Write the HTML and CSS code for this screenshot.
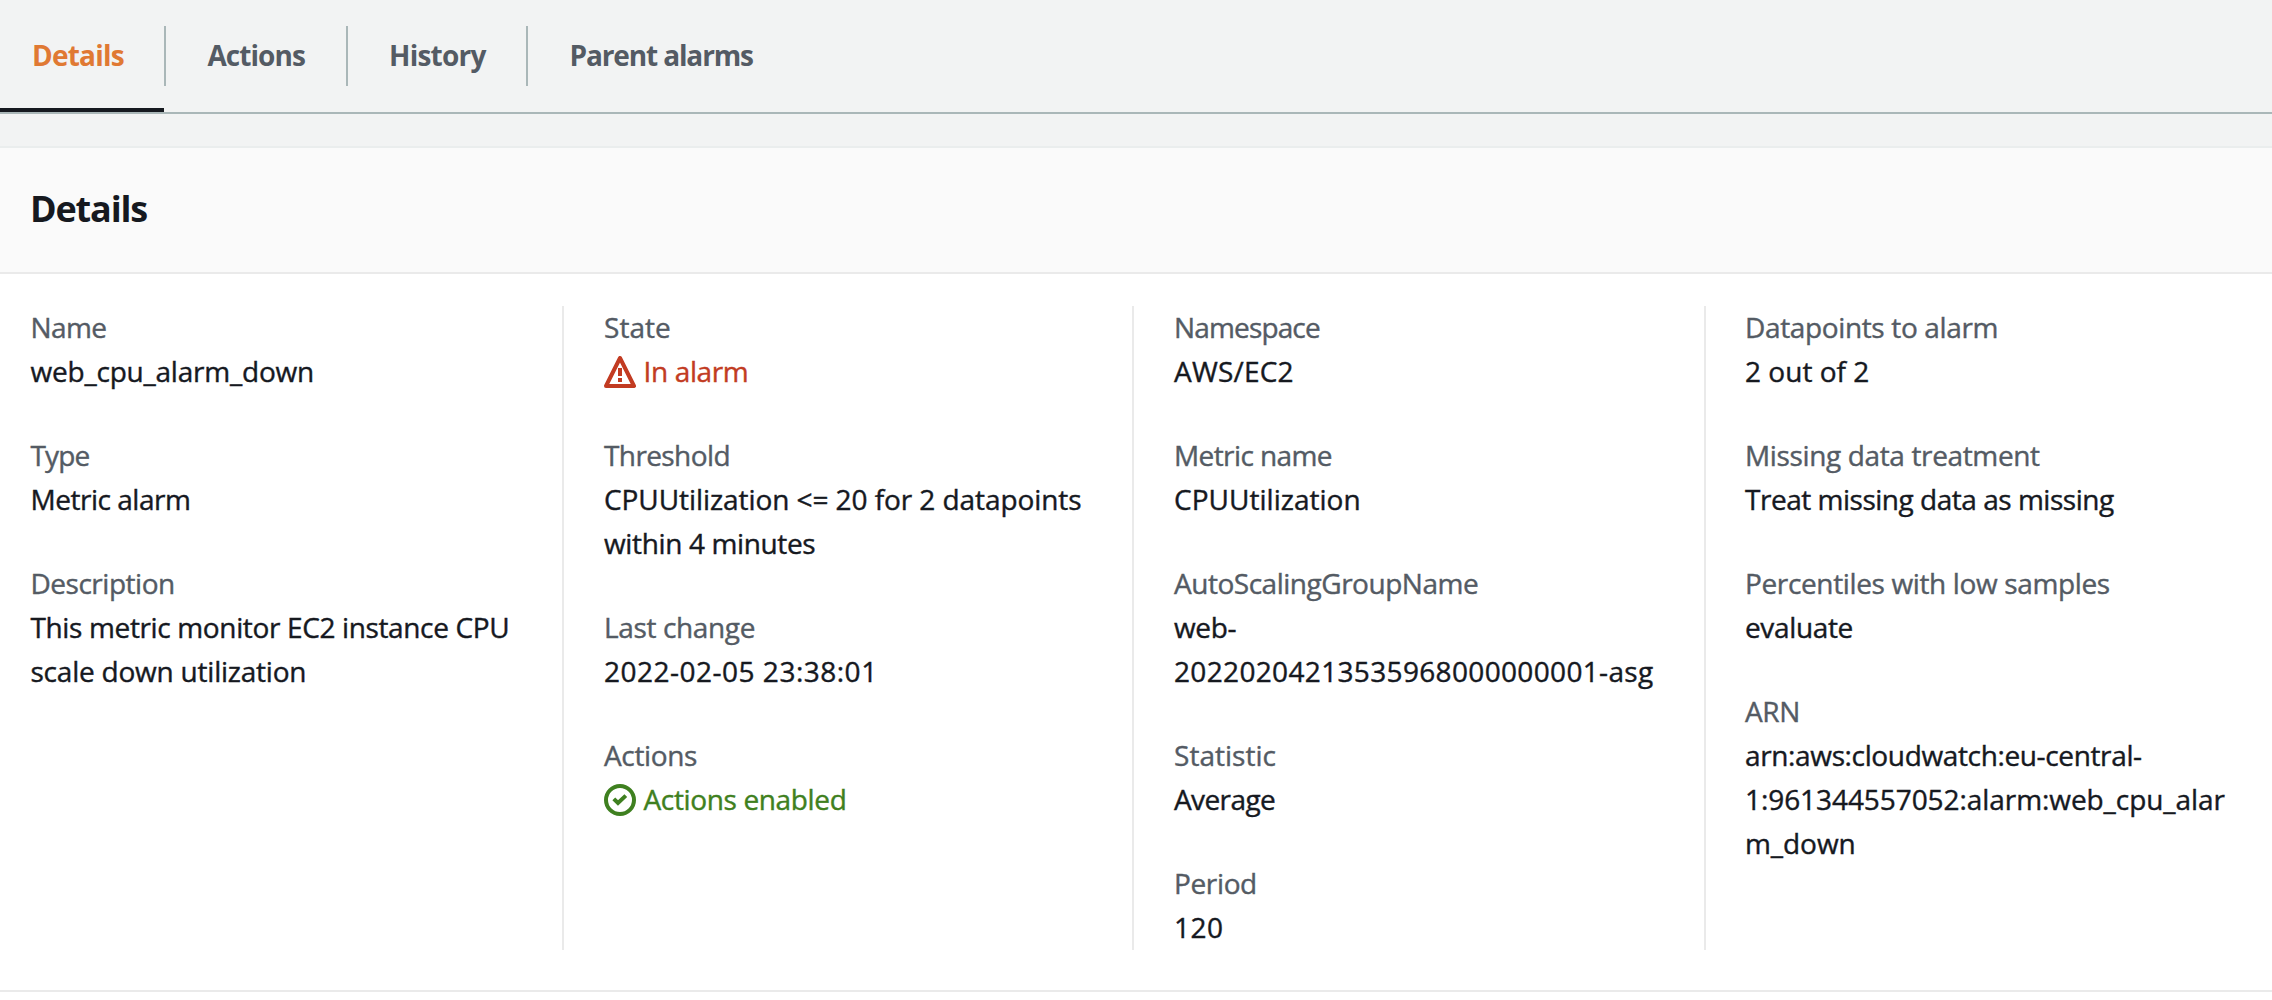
FILE: index.html
```
<!DOCTYPE html>
<html lang="en">
<head>
<meta charset="utf-8">
<title>Alarm details</title>
<link rel="stylesheet" href="styles.css">
</head>
<body>
<nav class="tabs">
  <a class="tab tab-details active"><span>Details</span></a>
  <a class="tab tab-actions"><span>Actions</span></a>
  <a class="tab tab-history"><span>History</span></a>
  <a class="tab tab-parents"><span>Parent alarms</span></a>
</nav>
<section class="panel">
  <header class="panel-header"><h2>Details</h2></header>
  <div class="columns">
    <dl class="column">
      <div class="field"><dt class="snug">Name</dt><dd class="loose">web_cpu_alarm_down</dd></div>
      <div class="field"><dt class="tight">Type</dt><dd class="medium">Metric alarm</dd></div>
      <div class="field"><dt class="medium">Description</dt><dd>This metric monitor EC2 instance CPU <span class="loose">scale down utilization</span></dd></div>
    </dl>
    <dl class="column">
      <div class="field"><dt class="even">State</dt>
        <dd class="status alarm">
          <svg class="icon" viewBox="0 0 16 16"><path class="round" d="M8 1l7 14H1z"/><path d="M8 6v4M8 11v2"/></svg>
          <span>In alarm</span>
        </dd></div>
      <div class="field"><dt class="snug">Threshold</dt><dd><span class="near">CPUUtilization &lt;= 20 for 2 datapoints</span> within 4 minutes</dd></div>
      <div class="field"><dt>Last change</dt><dd class="date">2022-02-05 23:38:01</dd></div>
      <div class="field"><dt>Actions</dt>
        <dd class="status ok">
          <svg class="icon" viewBox="0 0 16 16"><circle cx="8" cy="8" r="7"/><path d="M4.9 7.4L7 9.5l3.9-3.7"/></svg>
          <span>Actions enabled</span>
        </dd></div>
    </dl>
    <dl class="column">
      <div class="field"><dt class="tight">Namespace</dt><dd class="wide">AWS/EC2</dd></div>
      <div class="field"><dt class="snug">Metric name</dt><dd class="even">CPUUtilization</dd></div>
      <div class="field"><dt class="medium">AutoScalingGroupName</dt><dd>web-<br><span class="digits">20220204213535968000000001-asg</span></dd></div>
      <div class="field"><dt class="even">Statistic</dt><dd class="snug">Average</dd></div>
      <div class="field"><dt>Period</dt><dd class="date">120</dd></div>
    </dl>
    <dl class="column">
      <div class="field"><dt>Datapoints to alarm</dt><dd class="even">2 out of 2</dd></div>
      <div class="field"><dt>Missing data treatment</dt><dd class="medium">Treat missing data as missing</dd></div>
      <div class="field"><dt>Percentiles with low samples</dt><dd>evaluate</dd></div>
      <div class="field"><dt>ARN</dt><dd>arn:aws:cloudwatch:eu-central-<wbr><span class="near">1:961344557052:alarm:web_cpu_alarm_down</span></dd></div>
    </dl>
  </div>
</section>
</body>
</html>
```
FILE: styles.css
```
* { box-sizing: border-box; }

body {
  margin: 0;
  background: #fff;
  color: #16191f;
  font: 28px/44px "Open Sans", "Noto Sans", sans-serif;
  letter-spacing: -0.36px;
}

/* Tab bar */
.tabs {
  display: flex;
  height: 148px;
  padding-bottom: 34px;
  background: linear-gradient(#aab7b8, #aab7b8) 0 112px / 100% 2px no-repeat #f2f3f3;
}
.tab {
  display: flex;
  height: 112px;
  padding-top: 26px;
  color: #545b64;
  font-weight: 700;
}
.tab span {
  height: 60px;
  padding: 7px 0 8px 40px;
  border-right: 2px solid #aab7b8;
  white-space: nowrap;
}
.tab-details span { width: 166px; padding-left: 32px; letter-spacing: -0.8px; }
.tab-actions span { width: 182px; letter-spacing: -0.96px; padding-left: 41.5px; }
.tab-history span { width: 180px; letter-spacing: -0.78px; padding-left: 41px; }
.tab-parents span { border-right: 0; letter-spacing: -1.13px; padding-left: 41.5px; }
.tab.active {
  color: #e07933;
  background: linear-gradient(#16191f, #16191f) 0 108px / 164px 4px no-repeat;
}

/* Details panel */
.panel {
  height: 846px;
  margin-top: -2px;
  border-top: 2px solid #eaeded;
  border-bottom: 2px solid #eaeaea;
}
.panel-header {
  display: flex;
  align-items: center;
  height: 126px;
  padding: 0 30px 2px;
  background: #fafafa;
  border-bottom: 2px solid #eaeaea;
}
.panel-header h2 {
  margin: 0;
  font-size: 36px;
  font-weight: 700;
  letter-spacing: -1.16px;
}
.columns {
  display: grid;
  grid-template-columns: 562px 570px 572px 1fr;
  height: 644px;
  margin-top: 32px;
  -webkit-text-stroke: 0.4px currentColor;
}
.column {
  display: flex;
  flex-direction: column;
  gap: 40px;
  margin: 0;
  padding: 0 28px 0 40px;
  border-left: 2px solid #eaeaea;
}
.column:first-child { padding-left: 30.5px; border-left: 0; }
.column:last-child { padding-left: 39px; }
.field:first-child { margin-top: -1px; }
dt { color: #545b64; }
dd { margin: 0; overflow-wrap: anywhere; }

.status { display: flex; align-items: center; gap: 7.5px; }
.status.alarm { color: #c23b22; }
.status.ok { color: #3f8020; }
.icon { width: 32px; height: 32px; margin-top: 2px; fill: none; stroke: currentColor; stroke-width: 2; }
.round { stroke-linejoin: round; }

/* Tracking steps */
.tight { letter-spacing: -0.85px; }
.snug { letter-spacing: -0.6px; }
.medium { letter-spacing: -0.48px; }
.loose { letter-spacing: -0.22px; }
.near { letter-spacing: -0.07px; }
.even { letter-spacing: 0.03px; }
.wide { letter-spacing: 0.2px; }
.digits { letter-spacing: 0.34px; }
.date { letter-spacing: 0.5px; }
```
